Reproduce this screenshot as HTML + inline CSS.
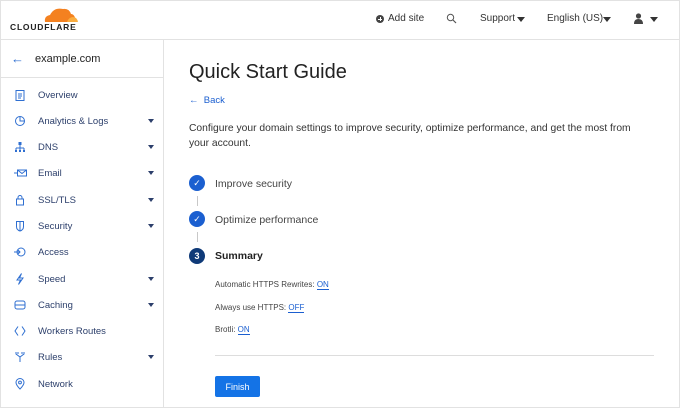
<!DOCTYPE html>
<html><head><meta charset="utf-8"><style>
*{box-sizing:border-box;margin:0;padding:0}
body{width:680px;height:408px;overflow:hidden;background:#fff;font-family:"Liberation Sans",sans-serif;position:relative;color:#333}
.frame{position:absolute;left:0;top:0;width:680px;height:408px;border:1px solid #e2e2e2}
.hdr{position:absolute;left:0;top:0;width:680px;height:40px;border-bottom:1px solid #e2e2e2}
.side{position:absolute;left:0;top:40px;width:164px;height:368px;border-right:1px solid #e2e2e2}
.dom{height:38px;border-bottom:1px solid #e2e2e2;display:flex;align-items:center;font-size:11px;color:#222}
.item{position:absolute;left:0;width:163px;height:20px;display:flex;align-items:center;font-size:9.5px;color:#2c3f6b}
.item svg{position:absolute;left:14px}
.item span{position:absolute;left:38px}
.item .car{position:absolute;left:148px;width:0;height:0;border-left:3px solid transparent;border-right:3px solid transparent;border-top:4px solid #2c3f6b}
.t{position:absolute;white-space:nowrap}
.circ{position:absolute;left:189px;width:16px;height:16px;border-radius:50%;background:#1b5fd0;color:#fff;font-size:9px;display:flex;align-items:center;justify-content:center}
.vl{position:absolute;left:196.5px;width:1px;height:10px;background:#c8c8c8}
a{color:#1b5fd0;text-decoration:none;border-bottom:1px solid #1b5fd0}
</style></head><body>
<div class="frame"></div>
<div class="hdr">
 <svg style="position:absolute;left:9px;top:5px" width="72" height="26" viewBox="0 0 72 26">
  <path d="M36 17 Q35 11 41 10 Q45 2 54 4 Q60 3 62 9 Q66 9 67 17 Z" fill="#f48120"/>
  <path d="M58 17 Q60 12 64 12 Q68 12 69 17 Z" fill="#faad3f"/>
  <text x="1" y="25" font-size="8.5" font-weight="bold" letter-spacing="0.8" fill="#222" font-family="Liberation Sans">CLOUDFLARE</text>
 </svg>
 <div class="t" style="left:376px;top:15px;width:8px;height:8px;border-radius:50%;background:#444"></div>
 <div class="t" style="left:378px;top:18.5px;width:4px;height:1px;background:#fff"></div>
 <div class="t" style="left:379.5px;top:17px;width:1px;height:4px;background:#fff"></div>
 <div class="t" style="left:388px;top:13px;font-size:10px;color:#333">Add site</div>
 <svg class="t" style="left:446px;top:13px" width="11" height="11" viewBox="0 0 11 11"><circle cx="4.5" cy="4.5" r="3.2" fill="none" stroke="#555" stroke-width="1"/><path d="M7 7 L10 10" stroke="#555" stroke-width="1.2"/></svg>
 <div class="t" style="left:480px;top:13px;font-size:10px;color:#333">Support</div>
 <div class="t" style="left:517px;top:17px;border-left:4px solid transparent;border-right:4px solid transparent;border-top:5px solid #333"></div>
 <div class="t" style="left:547px;top:13px;font-size:10px;color:#333">English (US)</div>
 <div class="t" style="left:603px;top:17px;border-left:4px solid transparent;border-right:4px solid transparent;border-top:5px solid #333"></div>
 <svg class="t" style="left:633px;top:13px" width="11" height="11" viewBox="0 0 11 11"><circle cx="5.5" cy="3" r="2.6" fill="#444"/><path d="M1 11 Q1 6 5.5 6 Q10 6 10 11Z" fill="#444"/></svg>
 <div class="t" style="left:650px;top:17px;border-left:4px solid transparent;border-right:4px solid transparent;border-top:5px solid #333"></div>
</div>
<div class="side">
 <div class="dom"><span style="color:#2f6fd1;font-size:13px;margin-left:11px">←</span><span style="margin-left:11px">example.com</span></div>
</div>
<div style="position:absolute;left:0;top:0">
 <div class="item" style="top:85px"><svg width="12" height="12" viewBox="0 0 12 12"><rect x="2" y="1.5" width="8" height="10" fill="none" stroke="#2f6fd1"/><path d="M4 5h4M4 7h4M4 9h3" stroke="#2f6fd1"/></svg><span>Overview</span></div>
 <div class="item" style="top:111px"><svg width="12" height="12" viewBox="0 0 12 12"><circle cx="6" cy="6" r="4.5" fill="none" stroke="#2f6fd1"/><path d="M6 1.5V6H10.5" fill="none" stroke="#2f6fd1"/></svg><span>Analytics &amp; Logs</span><i class="car"></i></div>
 <div class="item" style="top:137px"><svg width="12" height="12" viewBox="0 0 12 12"><rect x="4.5" y="1" width="3" height="3" fill="#2f6fd1"/><path d="M6 4v3M2 7h8M2 7v2M6 7v2M10 7v2" stroke="#2f6fd1"/><rect x="1" y="9" width="2" height="2" fill="#2f6fd1"/><rect x="5" y="9" width="2" height="2" fill="#2f6fd1"/><rect x="9" y="9" width="2" height="2" fill="#2f6fd1"/></svg><span>DNS</span><i class="car"></i></div>
 <div class="item" style="top:163px"><svg width="13" height="12" viewBox="0 0 13 12"><rect x="3.5" y="3" width="9" height="6" fill="none" stroke="#2f6fd1"/><path d="M3.5 3l4.5 3.5L12.5 3M0 6h3" stroke="#2f6fd1" fill="none"/></svg><span>Email</span><i class="car"></i></div>
 <div class="item" style="top:190px"><svg width="12" height="12" viewBox="0 0 12 12"><rect x="2.5" y="5" width="7" height="6" fill="none" stroke="#2f6fd1"/><path d="M4 5V3.5a2 2 0 0 1 4 0V5" fill="none" stroke="#2f6fd1"/></svg><span>SSL/TLS</span><i class="car"></i></div>
 <div class="item" style="top:216px"><svg width="12" height="12" viewBox="0 0 12 12"><path d="M2.5 1.5h7v5Q9.5 10 6 11Q2.5 10 2.5 6.5Z" fill="none" stroke="#2f6fd1"/><path d="M6 1.5v9" stroke="#2f6fd1"/></svg><span>Security</span><i class="car"></i></div>
 <div class="item" style="top:242px"><svg width="12" height="12" viewBox="0 0 12 12"><circle cx="7" cy="6" r="4" fill="none" stroke="#2f6fd1"/><path d="M0 6h6M4 4l2 2-2 2" fill="none" stroke="#2f6fd1"/></svg><span>Access</span></div>
 <div class="item" style="top:269px"><svg width="12" height="12" viewBox="0 0 12 12"><path d="M7.5 0.5L3 7h3.5L4.5 11.5 9 5H5.5Z" fill="none" stroke="#2f6fd1"/></svg><span>Speed</span><i class="car"></i></div>
 <div class="item" style="top:295px"><svg width="12" height="12" viewBox="0 0 12 12"><rect x="1" y="2" width="10" height="8" rx="2" fill="none" stroke="#2f6fd1"/><path d="M1 6h10" stroke="#2f6fd1"/></svg><span>Caching</span><i class="car"></i></div>
 <div class="item" style="top:321px"><svg width="12" height="12" viewBox="0 0 12 12"><path d="M4 1.5L1 6l3 4.5M8 1.5L11 6l-3 4.5" fill="none" stroke="#2f6fd1"/></svg><span>Workers Routes</span></div>
 <div class="item" style="top:347px"><svg width="12" height="12" viewBox="0 0 12 12"><path d="M2 1v2l4 3 4-3V1M6 6v5M4 1v2M8 1v2" fill="none" stroke="#2f6fd1"/></svg><span>Rules</span><i class="car"></i></div>
 <div class="item" style="top:374px"><svg width="12" height="12" viewBox="0 0 12 12"><path d="M6 11Q2 7 2 4.5a4 4 0 0 1 8 0Q10 7 6 11Z" fill="none" stroke="#2f6fd1"/><circle cx="6" cy="4.5" r="1.4" fill="none" stroke="#2f6fd1"/></svg><span>Network</span></div>
</div>
<div class="t" style="left:189px;top:61px;font-size:20px;color:#222">Quick Start Guide</div>
<div class="t" style="left:189px;top:95px;font-size:9.5px;color:#1b5fd0">←&nbsp;&nbsp;Back</div>
<div class="t" style="left:189px;top:121px;font-size:10.3px;line-height:15px;color:#333;white-space:normal;width:448px">Configure your domain settings to improve security, optimize performance, and get the most from your account.</div>
<div class="circ" style="top:175px">✓</div>
<div class="vl" style="top:196px"></div>
<div class="circ" style="top:211px">✓</div>
<div class="vl" style="top:232px"></div>
<div class="circ" style="top:248px;background:#0f3a78;font-weight:bold">3</div>
<div class="t" style="left:215px;top:178px;font-size:10.5px;color:#444">Improve security</div>
<div class="t" style="left:215px;top:214px;font-size:10.5px;color:#444">Optimize performance</div>
<div class="t" style="left:215px;top:250px;font-size:10.5px;font-weight:bold;color:#222">Summary</div>
<div class="t" style="left:215px;top:280px;font-size:8px;color:#444">Automatic HTTPS Rewrites: <a>ON</a></div>
<div class="t" style="left:215px;top:303px;font-size:8px;color:#444">Always use HTTPS: <a>OFF</a></div>
<div class="t" style="left:215px;top:325px;font-size:8px;color:#444">Brotli: <a>ON</a></div>
<div class="t" style="left:215px;top:355px;width:439px;height:1px;background:#ddd"></div>
<div class="t" style="left:215px;top:376px;width:45px;height:21px;background:#1473e6;border-radius:2px;color:#fff;font-size:9px;display:flex;align-items:center;justify-content:center">Finish</div>
</body></html>
